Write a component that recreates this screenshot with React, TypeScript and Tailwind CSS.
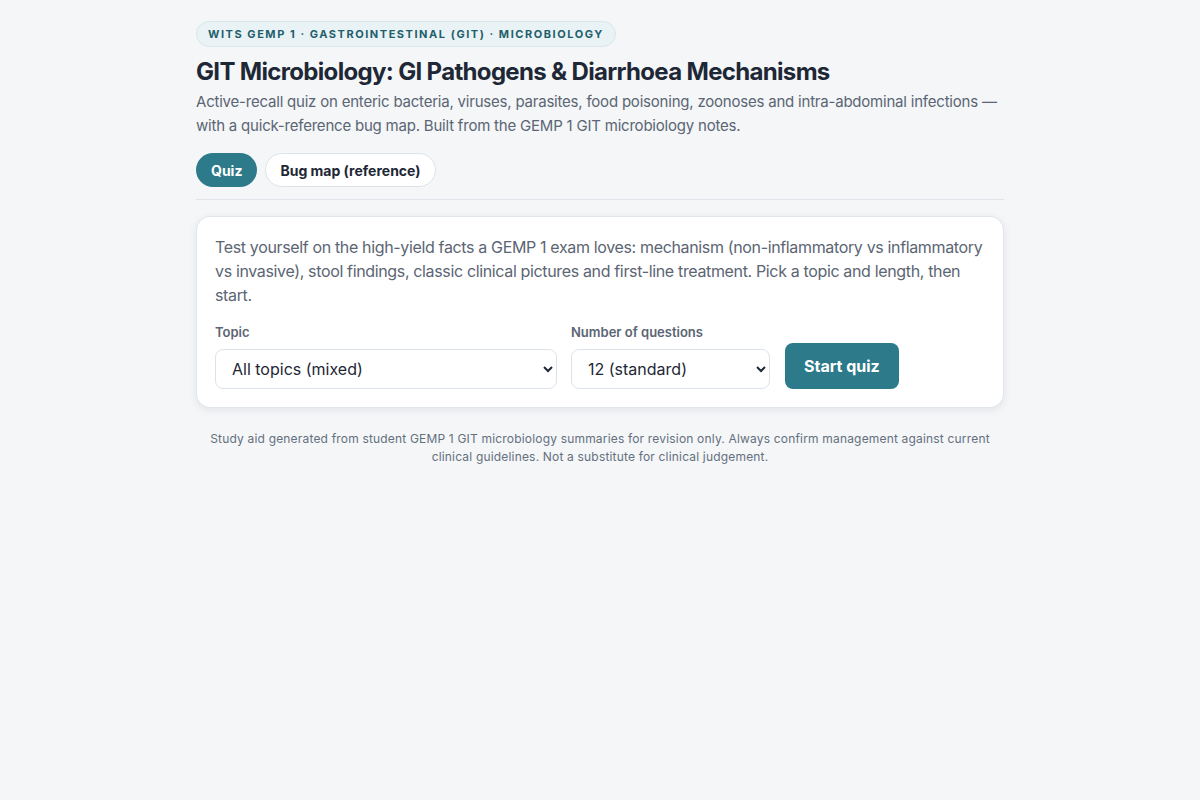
export default function App() {
  return (
    <div
      className="min-h-screen bg-[#f4f6f8] text-[#1e293b]"
      style={{ fontFamily: "Inter, 'Noto Sans', sans-serif" }}
    >
      <div className="mx-auto max-w-[808px] pt-5 pb-10">
        <span className="inline-block rounded-full border border-[#d9e6ea] bg-[#e9f2f4] px-[11px] py-[5px] text-[11px] font-bold uppercase leading-[14px] tracking-[0.14em] text-[#1f5f6d]">
          Wits GEMP 1 · Gastrointestinal (GIT) · Microbiology
        </span>
        <h1 className="mt-[9px] text-[24px] font-bold leading-8 tracking-[-0.028em] text-[#1e2735]">
          GIT Microbiology: GI Pathogens &amp; Diarrhoea Mechanisms
        </h1>
        <p className="mt-[2px] text-[15px] leading-6 tracking-[-0.014em] text-[#5b6573]">
          Active-recall quiz on enteric bacteria, viruses, parasites, food poisoning, zoonoses and intra-abdominal infections — with a quick-reference bug map. Built from the GEMP 1 GIT microbiology notes.
        </p>

        <div className="mt-[15px] flex gap-2 border-b border-[#dfe4ea] pb-3">
          <button className="h-[34px] rounded-full bg-[#2c7a8a] px-[15px] text-[14px] font-bold text-white">
            Quiz
          </button>
          <button className="h-[34px] rounded-full border border-[#dde3ea] bg-white px-[14px] text-[14px] font-bold text-[#1e2735]">
            Bug map (reference)
          </button>
        </div>

        <div className="mt-4 rounded-[14px] border border-[#e1e6ec] bg-white px-[18px] py-[18px] shadow-[0_2px_8px_rgba(15,23,42,0.08)]">
          <p className="text-[16px] leading-6 tracking-[-0.022em] text-[#5b6573]">
            Test yourself on the high-yield facts a GEMP 1 exam loves: mechanism (non-inflammatory vs inflammatory vs invasive), stool findings, classic clinical pictures and first-line treatment. Pick a topic and length, then start.
          </p>
          <div className="mt-4 flex items-end gap-[14px]">
            <label className="flex w-[342px] flex-col gap-2">
              <span className="text-[13px] font-semibold leading-[18px] text-[#5b6573]">Topic</span>
              <select className="h-10 rounded-lg border border-[#dde3ea] bg-white px-3 text-[16px] text-[#1e2735]">
                <option>All topics (mixed)</option>
              </select>
            </label>
            <label className="flex w-[199px] flex-col gap-2">
              <span className="text-[13px] font-semibold leading-[18px] text-[#5b6573]">Number of questions</span>
              <select className="h-10 rounded-lg border border-[#dde3ea] bg-white px-3 text-[16px] text-[#1e2735]">
                <option>12 (standard)</option>
              </select>
            </label>
            <button className="ml-px h-[46px] rounded-lg bg-[#2c7a8a] px-[19px] text-[16px] font-bold text-white">
              Start quiz
            </button>
          </div>
        </div>

        <p className="mt-[22px] text-center text-[12px] leading-[18px] tracking-[0.015em] text-[#64707e]">
          Study aid generated from student GEMP 1 GIT microbiology summaries for revision only. Always confirm management against current clinical guidelines. Not a substitute for clinical judgement.
        </p>
      </div>
    </div>
  );
}
